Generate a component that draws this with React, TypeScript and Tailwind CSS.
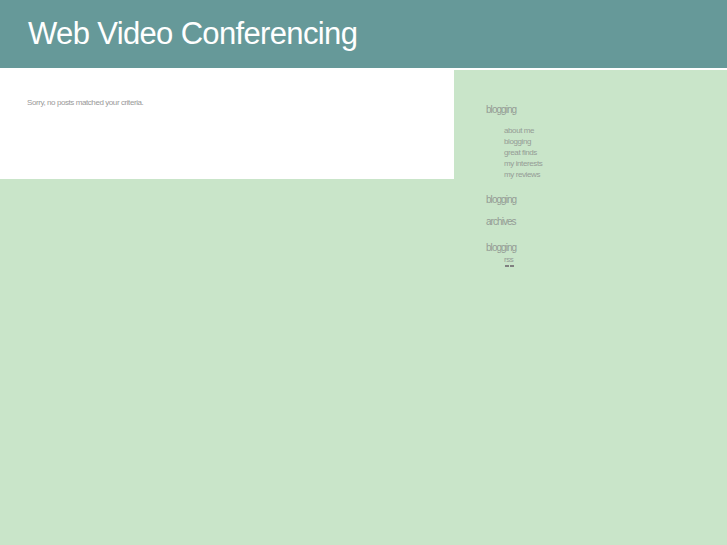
const links = ["about me", "blogging", "great finds", "my interests", "my reviews"];

function SideTitle({ children, className }: { children: string; className: string }) {
  return <h2 className={`text-[10px] leading-[12px] tracking-[-0.95px] text-[#949c95] ${className}`}>{children}</h2>;
}

export default function App() {
  return (
    <div className="min-h-screen bg-[#c9e5c9] font-['Liberation_Sans',Arial,sans-serif]">
      <header className="h-[70px] border-b-2 border-white bg-[#669999] pl-[28px] pt-[15px]">
        <h1 className="text-[31px] leading-[38px] tracking-[-0.65px] text-white">Web Video Conferencing</h1>
      </header>
      <div className="flex items-start">
        <main className="h-[109px] w-[454px] bg-white pl-[27px] pt-[28px]">
          <p className="text-[8px] leading-[10px] tracking-[-0.42px] text-[#999999]">Sorry, no posts matched your criteria.</p>
        </main>
        <aside className="flex-1 pl-[32px] pt-[34px]">
          <SideTitle className="">blogging</SideTitle>
          <ul className="mt-[9px] pl-[18px]">
            {links.map((link) => (
              <li key={link} className="h-[11px] text-[8px] leading-[11px] tracking-[-0.4px] text-[#959c96]">{link}</li>
            ))}
          </ul>
          <SideTitle className="mt-[14px]">blogging</SideTitle>
          <SideTitle className="mt-[10px]">archives</SideTitle>
          <SideTitle className="mt-[14px]">blogging</SideTitle>
          <p className="mt-[1px] pl-[18px] text-[8px] leading-[10px] tracking-[-0.4px] text-[#959c96]">rss</p>
          <div className="ml-[19px] flex gap-[1px]">
            <span className="h-[2px] w-[4px] bg-[#808080]" />
            <span className="h-[2px] w-[4px] bg-[#808080]" />
          </div>
        </aside>
      </div>
    </div>
  );
}
